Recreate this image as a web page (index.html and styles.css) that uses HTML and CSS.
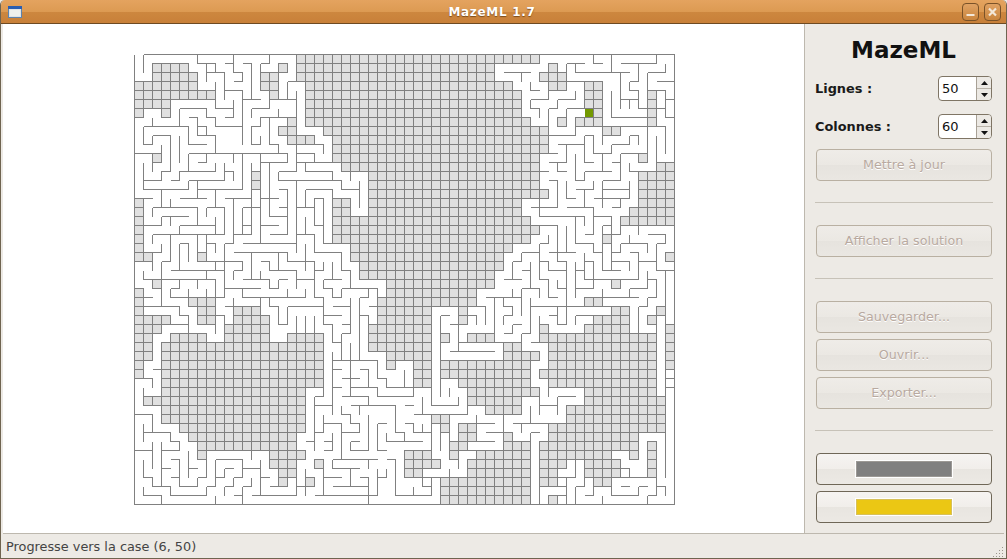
FILE: index.html
```html
<!DOCTYPE html>
<html lang="fr">
<head>
<meta charset="utf-8">
<title>MazeML 1.7</title>
<link rel="stylesheet" href="styles.css">
</head>
<body>
<div class="window">
  <header class="titlebar">
    <svg class="app-icon" viewBox="0 0 14 12" width="14" height="12"><rect x=".5" y=".5" width="13" height="11" fill="#dfe3e6" stroke="#5e83ad"/><rect x="0" y="0" width="14" height="3" fill="#2a5db0"/><rect x="2" y="4" width="10" height="6" fill="#eef0ee"/></svg>
    <div class="title">MazeML 1.7</div>
    <div class="wm-buttons">
      <div class="wm-btn"><svg viewBox="0 0 15 16" width="15" height="16"><rect x="3.5" y="10" width="8" height="2" fill="#f3e7d8"/></svg></div>
      <div class="wm-btn"><svg viewBox="0 0 15 16" width="15" height="16"><path d="M4 4.5l7 7m0-7l-7 7" stroke="#f3e7d8" stroke-width="2.2" fill="none"/></svg></div>
    </div>
  </header>
  <div class="body">
    <main class="canvas">
      <svg class="maze" viewBox="0 0 541 451" width="541" height="451">
        <defs>
          <pattern id="cell" patternUnits="userSpaceOnUse" width="1" height="1" viewBox="0 0 9 9">
            <rect width="9" height="9" fill="#e0e0e0"/>
            <path d="M0 .5H9M.5 0V9" stroke="#808080" fill="none"/>
          </pattern>
          <path id="gray" vector-effect="non-scaling-stroke" d="M18 0H45V1H18ZM2 1H6V2H2ZM16 1H17V2H16ZM18 1H40V2H18ZM46 1H47V2H46ZM2 2H7V3H2ZM14 2H16V3H14ZM18 2H40V3H18ZM45 2H48V3H45ZM0 3H7V4H0ZM14 3H16V4H14ZM19 3H42V4H19ZM46 3H48V4H46ZM50 3H52V4H50ZM0 4H9V5H0ZM15 4H16V5H15ZM19 4H43V5H19ZM50 4H52V5H50ZM57 4H58V5H57ZM0 5H4V6H0ZM19 5H43V6H19ZM50 5H52V6H50ZM57 5H58V6H57ZM0 6H1V7H0ZM3 6H4V7H3ZM19 6H43V7H19ZM51 6H52V7H51ZM57 6H58V7H57ZM17 7H18V8H17ZM19 7H44V8H19ZM47 7H48V8H47ZM49 7H52V8H49ZM57 7H58V8H57ZM16 8H18V9H16ZM21 8H46V9H21ZM52 8H54V9H52ZM17 9H20V10H17ZM22 9H46V10H22ZM22 10H46V11H22ZM2 11H3V12H2ZM22 11H45V12H22ZM56 11H57V12H56ZM23 12H45V13H23ZM58 12H60V13H58ZM13 13H14V14H13ZM26 13H45V14H26ZM56 13H60V14H56ZM13 14H14V15H13ZM26 14H45V15H26ZM56 14H60V15H56ZM26 15H46V16H26ZM56 15H60V16H56ZM0 16H1V17H0ZM22 16H24V17H22ZM26 16H43V17H26ZM56 16H60V17H56ZM0 17H1V18H0ZM22 17H24V18H22ZM26 17H43V18H26ZM55 17H60V18H55ZM0 18H1V19H0ZM22 18H44V19H22ZM54 18H60V19H54ZM0 19H1V20H0ZM22 19H45V20H22ZM0 20H1V21H0ZM22 20H44V21H22ZM52 20H53V21H52ZM0 21H1V22H0ZM24 21H42V22H24ZM0 22H2V23H0ZM7 22H8V23H7ZM24 22H41V23H24ZM59 22H60V23H59ZM25 23H41V24H25ZM25 24H40V25H25ZM2 25H3V26H2ZM28 25H40V26H28ZM53 25H54V26H53ZM0 26H1V27H0ZM28 26H38V27H28ZM0 27H1V28H0ZM6 27H9V28H6ZM27 27H38V28H27ZM50 27H52V28H50ZM0 28H1V29H0ZM7 28H9V29H7ZM11 28H14V29H11ZM27 28H33V29H27ZM36 28H37V29H36ZM53 28H55V29H53ZM58 28H59V29H58ZM0 29H4V30H0ZM7 29H9V30H7ZM11 29H15V30H11ZM27 29H33V30H27ZM36 29H37V30H36ZM51 29H55V30H51ZM57 29H58V30H57ZM0 30H3V31H0ZM10 30H15V31H10ZM26 30H33V31H26ZM45 30H46V31H45ZM50 30H55V31H50ZM59 30H60V31H59ZM0 31H2V32H0ZM4 31H8V32H4ZM10 31H15V32H10ZM17 31H21V32H17ZM26 31H33V32H26ZM34 31H35V32H34ZM37 31H40V32H37ZM45 31H58V32H45ZM59 31H60V32H59ZM0 32H2V33H0ZM3 32H21V33H3ZM26 32H33V33H26ZM41 32H43V33H41ZM46 32H58V33H46ZM59 32H60V33H59ZM0 33H2V34H0ZM3 33H21V34H3ZM28 33H33V34H28ZM41 33H45V34H41ZM46 33H58V34H46ZM59 33H60V34H59ZM0 34H1V35H0ZM3 34H21V35H3ZM28 34H29V35H28ZM31 34H33V35H31ZM34 34H44V35H34ZM46 34H58V35H46ZM59 34H60V35H59ZM0 35H1V36H0ZM3 35H21V36H3ZM31 35H33V36H31ZM34 35H44V36H34ZM45 35H58V36H45ZM3 36H21V37H3ZM31 36H33V37H31ZM36 36H44V37H36ZM46 36H58V37H46ZM3 37H19V38H3ZM37 37H45V38H37ZM50 37H58V38H50ZM1 38H19V39H1ZM37 38H43V39H37ZM50 38H59V39H50ZM3 39H19V40H3ZM39 39H43V40H39ZM48 39H59V40H48ZM3 40H19V41H3ZM33 40H35V41H33ZM48 40H59V41H48ZM5 41H19V42H5ZM34 41H35V42H34ZM36 41H38V42H36ZM46 41H59V42H46ZM6 42H18V43H6ZM36 42H38V43H36ZM41 42H42V43H41ZM46 42H56V43H46ZM7 43H18V44H7ZM35 43H37V44H35ZM41 43H44V44H41ZM45 43H56V44H45ZM57 43H58V44H57ZM7 44H8V45H7ZM15 44H19V45H15ZM30 44H33V45H30ZM35 44H36V45H35ZM38 44H44V45H38ZM45 44H53V45H45ZM55 44H56V45H55ZM57 44H58V45H57ZM15 45H18V46H15ZM20 45H21V46H20ZM30 45H34V46H30ZM37 45H44V46H37ZM45 45H48V46H45ZM50 45H54V46H50ZM57 45H58V46H57ZM16 46H18V47H16ZM30 46H32V47H30ZM37 46H44V47H37ZM45 46H47V47H45ZM50 46H54V47H50ZM57 46H58V47H57ZM16 47H17V48H16ZM19 47H20V48H19ZM34 47H44V48H34ZM45 47H47V48H45ZM51 47H53V48H51ZM34 48H44V49H34ZM34 49H44V50H34ZM46 49H47V50H46Z"/>
        </defs>
        <g transform="scale(9)">
          <use href="#gray" fill="url(#cell)"/>
        </g>
        <g transform="translate(.5 .5) scale(9)">
          <use href="#gray" class="wall"/>
          <path class="wall" vector-effect="non-scaling-stroke" d="M1 0H60V50H0V0M1 0V2
          M7 0V1H9M8 1V3M9 1V2M8 2H10V5M10 1H11M11 0V2H12V3H11M12 1H13M13 1V5M12 5H14M14 4H15V5M14 1V4M14 1H15M15 0V1
          M10 4H12V10M9 3V6H11M11 5V7M10 7H11
          M5 6H8M5 6V8M8 6V7H9V8H12M6 7H7V9M7 8H8V9M7 9H9V11M6 10H8M6 8V10M1 8H6M1 8V10H2M2 9V10M2 9H4V13H3V14H1M1 12V15H6V14M4 14H5V13H9V12
          M2 7V8M0 11H3M3 10V12M2 12V13M5 9V12M6 11H16M6 11V13M7 12H8V11M11 11V12M12 11V15M7 15H12M7 14V16M10 12V14M10 13H11V14M6 14H10
          M13 12V13M12 11H14V12H17V11H16V10H15V7H14V8H13V10H14V9M14 7H16M13 6H15M13 6V7M15 5H18M15 5V6M16 6V7H17M17 3V5M17 3H19M18 4V12H20V12M18 11H20V12H22M21 10V11M20 10H21M18 12V13M16 13H18M16 13V14M19 12V13H22V14M16 14H23V15H25M25 14V17M24 13V14
          M18 14V17M16 15H17V17M15 12V17M14 16H16M19 15V17M19 15H22V16M18 17H20V16H21V17M14 12V17M10 16H13M11 16V17M13 15V17M12 17H14M9 15V17M5 16H8M4 16V17M2 17H7M8 17H10M3 15V17M0 16H2
          M51 0V1H52M53 0V2M49 2H55M49 1V2M48 1H50M48 1V2M54 1H56M56 1V2M56 1H58M58 0V1M59 1V2M57 2H59M57 2V4M56 2V3M55 3H56M55 3V4H56M58 3H60M57 4H59M59 4V7M59 5H60M58 6H59M59 7H60
          M54 2V6M53 4V7H57M55 5V6M54 5H56M55 4H56V6M56 6H57M52 3V7M41 2H44M43 2V3M44 3V4H45M46 3V5M44 5H46M44 5V6H45V7M46 6H47M46 6V9M47 5V6M47 5H49V4M48 3H50M50 3V6M48 6H50M48 6V8M49 7V9M46 9H49
          M52 8H59M59 8V11M58 9V12M57 8V11M52 9V10M55 9H56V10M55 9V10M53 10H55M53 10V11M51 11H53M51 9V11M50 9H51M50 9V12H51M47 10H50M48 10V12M45 11H47M46 12H48M47 12V13M45 13H46M47 13H48M49 11V14H50M50 13V14M50 13H53M52 11V13M53 12H54M54 11V14M54 11H57M55 12V13M55 13H56M52 14H54M48 14V16M49 15H51M51 14V15M48 16H49M50 15V17M47 14V17M46 14H47M52 14V17M51 16H53M52 15H55M55 14V16M53 16H55M53 17H54M54 16V17M48 17H51M44 17H47M45 16V17
          M2 17H7M7 17V19M3 18H6M3 18V19M2 17V18M1 16V19H3M4 18V19M5 19H9M5 19V20M2 20H5M2 20V21M8 17V18M8 17H10M10 17V20H9M9 18V20M5 20H9M7 20V22M8 21H9V22M8 20V22M8 23H10M10 21V23M10 21H11M11 16V21M12 17V20M12 17H13M13 16V17M12 19H13M13 17V20M11 20H13M14 17V21M15 16V18H17M16 17H17M17 16V20M14 19H16M15 20H17M12 21H18M18 16V22M18 17H20M20 16V17M19 18V20M18 20H20M20 20V22M20 17V19H21M21 16V21H22M19 21V24M17 23H20M17 22V23M11 22H17M16 22V24M14 23H15V24H18V26M16 25H17M16 25V26M15 26H16M15 25V26M12 25H15M14 24V25M13 22V25
          M9 23H12V24M11 24H12M11 24V25M10 23V26M9 23V24H10M10 26H14M12 27H19M12 26V27M17 26V27M19 26V27M18 25H20M20 23V27M20 24H21M21 23V24M20 22H23M23 22V24H24V26M23 26H27M23 26V27M22 27H23M22 26V27M21 26H22M21 25V26M21 25H23M22 23V25M20 27H21M21 27V29M17 28H21M16 28V30M15 27V28H16M17 28V30M16 30H17M18 29V31M19 29V31M20 29V31
          M21 29H23M22 28H24M21 29V30H22M22 30V32M23 30H24M24 27V31M23 31H24M23 31V34M22 32H23M24 32V34M25 27V34M25 27H26M26 26V27M26 28H27M25 29H26M26 29V30M27 26V27
          M2 23V24M1 24V25M1 25H9M8 24H9M4 24H8M8 24V25M3 21V22M2 22H3M3 23H4M4 20V23M5 21V24M6 21V23M5 21H6M3 23V28M1 28H5M5 28V29H6M6 29V31M3 30H6M3 30V31M1 27H2M4 26V27H10M4 26H5M5 25V26M6 26V27M7 25V26M8 26V27M9 25V27M10 26V27M9 30V31M10 28H11M11 27V28M9 29H10M10 29V30M14 27V28
          M45 17V18M45 18H50M48 17H50M50 18V19M49 18V21M49 21H51M50 20H51M51 17V20M51 18H53M52 16V17M54 16V17M53 18V20M52 19H53M52 19V22M51 22H52M51 21V22M53 20H54M54 19V20M56 19V20M56 19H60M57 20H59M59 20V21M58 21H59M57 21V22M54 21H57M55 20V21M54 21V22M53 22H54M53 21V24M52 24H54M52 22V24M55 22H56M56 22V25M56 23H58M58 21V24M58 24H60M53 23H55M55 23V24M57 24V26M57 25H58M58 25V27M57 27H58M57 27V28M56 28H57M55 26H57M55 26V27M52 27H56M52 26V27M49 26H51M51 25V26M50 25H56M49 24H50M50 22V25M50 23H51M51 23V25M49 23V27M46 22H49M47 22V23M48 23V28M47 23H48M46 24H48M46 23V24M45 23H46M45 21V25M45 21H46M46 20V21M47 25V26M47 26H48M46 25V27M45 25H46M46 27H47M45 26V27M44 26H45M43 26H44M43 26V29M44 27V28M44 28H50M44 28V31M43 31H44M43 31V33M42 30H43M42 30V31M41 31H42M41 29H42M41 29V30M42 28V29M41 28H42M41 27V28M39 27H42M42 26V27H43M40 27V32M39 28V30M38 28H39M38 29V30M37 29H38M37 29V30M36 30H37M36 30V33M35 30H36M34 29H35M34 29V34M35 33H40M36 32H41
          M43 22H45M43 22V23M42 23H43M42 23V25M41 25H43M43 24H44M44 23V26M45 19H47M47 19V22M48 19V22M46 29H47M47 28V30M47 30H48M48 28V30M45 29V30M49 29V30M49 29H52M52 28H54M56 28V31M59 24V36M58 29V31
          M44 32H46M46 32V34M45 30V32
          M2 35H3M2 36V37M0 36H2M1 37V39M0 40H2M2 40V42M2 42H4M4 42V43M4 43H5M5 43V44M1 41V43M1 42H2M3 44H5M3 43V48M0 44H2M2 43V46M1 45V47M1 47H2M2 47V48M2 48H4M4 48V49M4 49H8M8 48V49M8 48H9M9 47V48M9 47H10M10 46V47M10 46H11M9 45V47M9 45H12M12 45V47M11 47H12M10 48H11M10 48V49M11 47V48M12 48H13M12 48V50M11 49H12M13 47V48M12 46H14M14 45V49M14 47H15M15 48H16M18 47V49M13 49H18M19 46V49M18 48H19M21 45V49M20 49H26M26 47V49M22 48H26M21 47H23M22 46H25M22 45V46M22 45H27M27 46V49M26 49H27M26 49V50M24 46V48M25 47H26M26 45V46M27 47H28M28 46V47M28 45H29M29 45V49M29 49H30M27 44H28M27 41H28M28 42V43M28 43H30M29 39V42M29 42H30M25 39H29M25 39V40M24 39H25M23 40H24M23 39V40M24 40V41M24 41H25M25 41V42M23 42H25M23 41V45M21 41H23M21 40V42M20 42H21M20 38V44M20 39H22M21 37V38M20 38H21M22 36V40M22 37H23M22 35H23M22 33V36M22 34H24M24 33V38M23 36H25M23 38H26M26 38V39M25 35H26M26 35V37M24 37H27M27 37V38M27 38H30M27 34V36M24 34H27M27 36H28M28 36V37M28 37H30
          M19 43H20M21 43H22M21 44H22M22 42V44M24 43H25M24 43V44M24 44H26M26 40V44M27 41V44M4 45H5M5 45V48M4 47H5M3 46H4M5 48H7M7 47V48M7 47H8M8 45V47M6 46H7M6 44V47M8 44H15M13 44V45M15 44V46M1 48V49M1 49H3M3 49V50M9 49V50
          M30 35V37M29 37H31M31 37V38M30 38H31M30 39H31M32 38V40M31 40H37M37 39V40M38 40V41M38 41H40M41 39V42M39 42H41M38 43H40M37 44H41M31 41V42M32 41V42M31 42H33M33 41V44M30 41H31M30 42V43M29 43H32M34 42V44M35 42V44M34 45V46M33 47H35M32 46V48M32 47H33M33 47V48M32 48H33M33 48V49M29 49H33M31 48V49M35 46V47M36 45V46M35 47H37
          M33 28V39H36V38M34 36V38M35 37V38M34 36H36M36 36V37
          M42 41H46M43 41V42M44 39V41M43 38V40M45 38V40M43 38H45M45 39H47M47 38V40M47 38H49M46 37H49M46 37V38M44 42V50M44 42H45M48 45H49M49 45V47M47 47H49M48 47V50M50 46V48M49 48H50M49 48V50M45 48H48M45 48V50M47 49H48M50 49H51M51 48V49M51 48H53M52 49V50M53 48V49M53 49H56M53 44V48M53 44H55M55 44V45M54 46H55M54 45V46M55 46V47M53 47H55M55 47H58M58 47V49M56 48V49M54 48H55M56 48H57M57 49V50M57 49H58M58 48H59M59 48V49M59 36V47M59 36H60M59 37H60M56 42H59"/>
        </g>
        <rect class="current" x="451" y="55" width="8" height="8"/>
      </svg>
    </main>
    <aside class="side">
      <h1 class="heading">MazeML</h1>
      <div class="field"><label>Lignes :</label><div class="spin"><span class="spin-val">50</span><div class="arrows"><div class="arrow"><svg viewBox="0 0 7 4" width="7" height="4"><path d="M3.5 0L7 4H0z"/></svg></div><div class="arrow"><svg viewBox="0 0 7 4" width="7" height="4"><path d="M0 0H7L3.5 4z"/></svg></div></div></div></div>
      <div class="field"><label>Colonnes :</label><div class="spin"><span class="spin-val">60</span><div class="arrows"><div class="arrow"><svg viewBox="0 0 7 4" width="7" height="4"><path d="M3.5 0L7 4H0z"/></svg></div><div class="arrow"><svg viewBox="0 0 7 4" width="7" height="4"><path d="M0 0H7L3.5 4z"/></svg></div></div></div></div>
      <button class="btn off first">Mettre à jour</button>
      <hr class="sep">
      <button class="btn off">Afficher la solution</button>
      <hr class="sep">
      <div class="group">
        <button class="btn off">Sauvegarder...</button>
        <button class="btn off">Ouvrir...</button>
        <button class="btn off">Exporter...</button>
      </div>
      <hr class="sep">
      <div class="group">
        <button class="btn"><span class="swatch swatch-gray"></span></button>
        <button class="btn"><span class="swatch swatch-yellow"></span></button>
      </div>
    </aside>
  </div>
  <footer class="status">
    <span>Progresse vers la case (6, 50)</span>
    <svg class="grip" viewBox="0 0 12 12" width="12" height="12"><path d="M10 1h1v1h-1zM10 4h1v1h-1zM7 4h1v1h-1zM10 7h1v1h-1zM7 7h1v1h-1zM4 7h1v1h-1zM10 10h1v1h-1zM7 10h1v1h-1zM4 10h1v1h-1zM1 10h1v1h-1z" fill="#9a958c"/></svg>
  </footer>
</div>
</body>
</html>
```
FILE: styles.css
```css
html, body { margin: 0; padding: 0; height: 100%; background: #efebe7; overflow: hidden; }
body { font-family: "DejaVu Sans", sans-serif; font-size: 13px; color: #1a1a1a; }
.window { box-sizing: border-box; width: 1007px; height: 559px; display: flex; flex-direction: column; background: #edeae5; border-left: 1px solid #6f6450; border-right: 1px solid #6f6450; border-bottom: 1px solid #6f6450; border-radius: 5px 5px 0 0; overflow: hidden; }
.titlebar { height: 24px; flex: none; box-sizing: border-box; display: flex; align-items: center; padding: 0 5px 0 7px; border-bottom: 1px solid #6e4a22; background: linear-gradient(#e4a35f 0, #dc9a52 12px, #cd873f 12px, #c88039 100%); }
.app-icon { flex: none; }
.title { flex: 1; text-align: center; color: #fff; font-weight: bold; font-size: 12px; letter-spacing: .7px; text-shadow: 0 1px 1px #7b4c1c; }
.wm-buttons { display: flex; gap: 5px; }
.wm-btn { width: 17px; height: 18px; box-sizing: border-box; border: 1px solid #7a5228; border-radius: 4px; background: linear-gradient(#e0a263, #c9853e); }
.wm-btn svg { display: block; }
.body { flex: 1; min-height: 0; display: flex; padding-left: 2px; padding-right: 2px; }
.canvas { flex: 1; min-width: 0; background: #fff; display: flex; align-items: center; justify-content: center; padding-top: 1px; padding-left: 2px; }
.maze { display: block; }
.wall { fill: none; stroke: #808080; stroke-width: 1; shape-rendering: crispEdges; }
.current { fill: #739900; }
.side { width: 200px; flex: none; box-sizing: border-box; border-left: 1px solid #bdb8ae; background: #edeae5; padding: 0 12px 0 10px; display: flex; flex-direction: column; }
.heading { margin: 12px 0 0; height: 28px; line-height: 28px; font-size: 23px; font-weight: bold; text-align: center; color: #111; }
.field { display: flex; align-items: center; justify-content: space-between; height: 25px; margin-top: 12px; font-weight: bold; font-size: 12.9px; }
.field + .field { margin-top: 13px; }
.heading + .field { margin-top: 12px; }
.spin { width: 54px; height: 25px; box-sizing: border-box; border: 1px solid #7f7565; border-radius: 4px; background: #fff; display: flex; font-weight: normal; }
.spin-val { flex: 1; padding-left: 3px; line-height: 23px; font-size: 13px; color: #111; }
.arrows { width: 14px; display: flex; flex-direction: column; background: #ece9e4; border-left: 1px solid #a8a196; border-radius: 0 3px 3px 0; }
.arrow { flex: 1; display: flex; align-items: center; justify-content: center; }
.arrow + .arrow { border-top: 1px solid #b8b2a8; }
.arrow svg { display: block; fill: #111; }
.btn { display: block; width: 176px; margin-left: 1px; height: 32px; box-sizing: border-box; border: 1px solid #6f6757; border-radius: 4px; background: linear-gradient(#f6f4f2 0, #f1eeea 50%, #e8e5e0 50%, #ece9e4 100%); font-family: "DejaVu Sans", sans-serif; font-size: 12.7px; padding: 0; }
.btn.off { border-color: #b9b0a2; color: #b8a9a0; text-shadow: 0 1px 0 #fff; padding-bottom: 2px; background: linear-gradient(#efece8 0, #ebe8e3 50%, #e6e3de 50%, #eae7e2 100%); }
.btn.first { margin-top: 10px; }
.sep { width: 178px; margin: 21px 0 0; border: 0; border-top: 1px solid #c7c2b8; height: 0; }
.sep + .btn { margin-top: 22px; }
.sep + .group { margin-top: 22px; }
.group { display: flex; flex-direction: column; gap: 6px; }
.swatch { display: block; width: 98px; height: 18px; margin: 0 auto; box-sizing: border-box; border: 1px solid #fff; box-shadow: 0 0 0 1px rgba(190,185,175,.45) inset; }
.swatch-gray { background: #808080; }
.swatch-yellow { background: #ebc714; }
.status { height: 25px; flex: none; box-sizing: border-box; margin: 0 2px; border-top: 1px solid #bdb8ae; background: #edeae5; display: flex; align-items: center; justify-content: space-between; padding-left: 3px; font-size: 12.85px; color: #444; position: relative; }
.grip { position: absolute; right: 0; bottom: 0; }
```
